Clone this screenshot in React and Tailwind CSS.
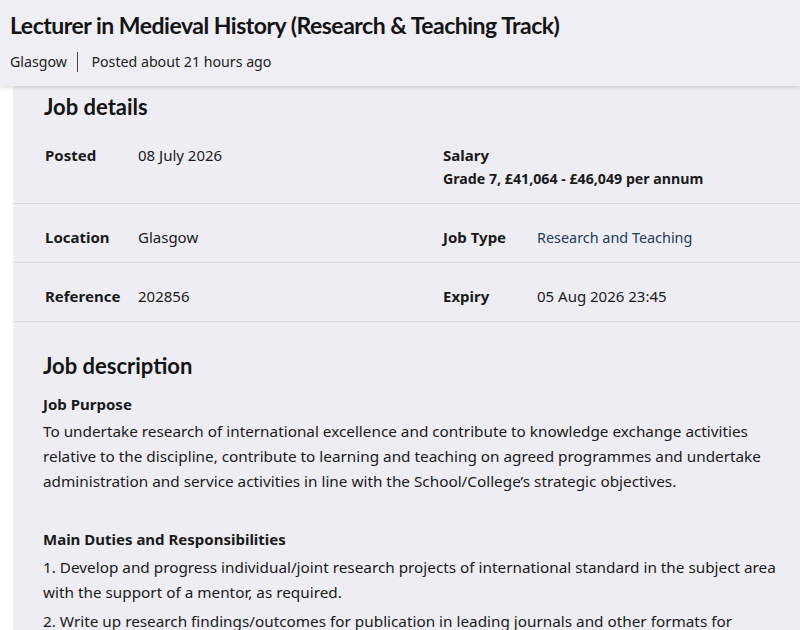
import React from "react";

const pt = { fontFamily: '"Noto Sans", "Open Sans", sans-serif' };
const head = { fontFamily: 'Lato, "Noto Sans", sans-serif' };

function Row({ l1, v1, l2, v2, tall, blue }) {
  return (
    <div className="flex border-b border-[#d9d8de] text-[15px] leading-[23px] text-[#1a1a1a]">
      <div className="flex w-[430px] pl-[32px] pt-[22px] pb-[13px]">
        <div className="w-[93px] font-bold">{l1}</div>
        <div>{v1}</div>
      </div>
      <div className="flex pt-[22px] pb-[13px]">
        {tall ? (
          <div>
            <div className="font-bold">{l2}</div>
            <div className="font-bold text-[14.2px]">{v2}</div>
          </div>
        ) : (
          <>
            <div className="w-[94px] font-bold">{l2}</div>
            <div className={blue ? "text-[#1f3a5a] text-[14.4px]" : ""}>{v2}</div>
          </>
        )}
      </div>
    </div>
  );
}

export default function App() {
  return (
    <div className="w-[800px] h-[630px] overflow-hidden bg-white" style={pt}>
      <div className="relative z-10 h-[86px] bg-[#efeef4] px-[10px] pt-[9px] shadow-[0_2px_4px_rgba(0,0,0,0.12)]">
        <h1 className="text-[23px] font-bold leading-[32px] tracking-[-0.5px] text-[#141414]" style={head}>
          Lecturer in Medieval History (Research &amp; Teaching Track)
        </h1>
        <div className="mt-[10px] flex items-center text-[14.2px] text-[#222]">
          <span>Glasgow</span>
          <span className="ml-[10px] mr-[13px] h-[20px] w-[1.5px] bg-[#444]"></span>
          <span>Posted about 21 hours ago</span>
        </div>
      </div>
      <div className="ml-[13px] h-[544px] bg-[#eeedf3]">
        <h2 className="pl-[31px] pt-[7px] text-[22px] font-bold leading-[28px] text-[#141414]" style={head}>Job details</h2>
        <div className="mt-[1px]">
          <Row tall l1="Posted" v1="08 July 2026" l2="Salary" v2="Grade 7, £41,064 - £46,049 per annum" />
          <Row l1="Location" v1="Glasgow" l2="Job Type" v2="Research and Teaching" blue />
          <Row l1="Reference" v1="202856" l2="Expiry" v2="05 Aug 2026 23:45" />
        </div>
        <div className="pl-[30px] pr-[8px] text-[#1a1a1a]">
          <h2 className="pt-[29px] text-[22px] font-bold leading-[30px] text-[#141414]" style={head}>Job description</h2>
          <h3 className="mt-[13px] text-[15px] font-bold leading-[20px]">Job Purpose</h3>
          <p className="mt-[5px] text-[15.3px] leading-[25px]">
            To undertake research of international excellence and contribute to knowledge exchange activities relative to the discipline, contribute to learning and teaching on agreed programmes and undertake administration and service activities in line with the School/College’s strategic objectives.
          </p>
          <h3 className="mt-[35px] text-[15px] font-bold leading-[20px]">Main Duties and Responsibilities</h3>
          <p className="mt-[6px] text-[15.3px] leading-[25px]">
            1. Develop and progress individual/joint research projects of international standard in the subject area with the support of a mentor, as required.
          </p>
          <p className="mt-[4px] text-[15.3px] leading-[25px]">
            2. Write up research findings/outcomes for publication in leading journals and other formats for dissemination.
          </p>
        </div>
      </div>
    </div>
  );
}
